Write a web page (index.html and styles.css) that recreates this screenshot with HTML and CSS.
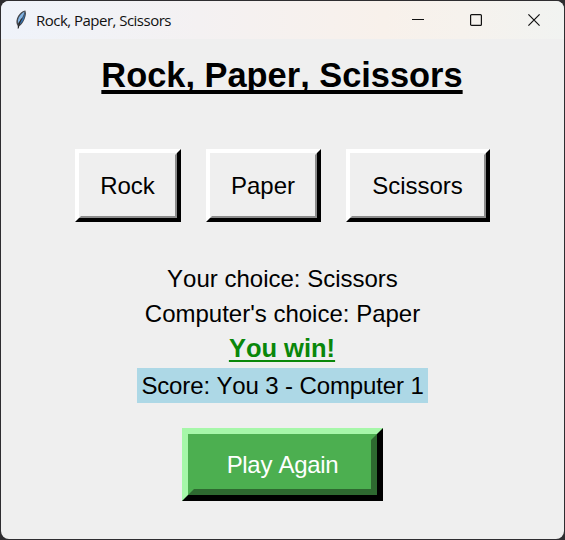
FILE: index.html
```html
<!DOCTYPE html>
<html lang="en">
<head>
<meta charset="utf-8">
<title>Rock, Paper, Scissors</title>
<link rel="stylesheet" href="styles.css">
</head>
<body>
<div class="window">
  <header class="titlebar">
    <svg class="feather" width="12" height="20" viewBox="0 0 12 20">
      <path d="M10.4 .6C7.200 1 3.400 4.400 2 8.600c-.9 2.700-.8 4.900.5 7L3.200 18.500l1.100-2.300C7.800 14 10.600 8.300 11 3.200z" fill="#45484e"/>
      <path d="M9.600 1.500C6.600 3 3.800 6.300 3 10l-.1 3.300C5.500 10.500 8.600 6.500 9.600 1.500z" fill="#82b4e4"/>
      <path d="M10.200 2C9 7 6.500 10 4.200 14.500c3.600-1.800 5.600-6.800 6-12.500z" fill="#2f75bb"/>
      <path d="M6.600 8.500C5 11.500 3.900 14 3.100 18.500" stroke="#222" stroke-width="1" fill="none"/>
    </svg>
    <span class="caption">Rock, Paper, Scissors</span>
    <div class="controls">
      <svg width="12" height="12" viewBox="0 0 12 12"><path d="M0 5.500h12"/></svg>
      <svg width="12" height="12" viewBox="0 0 12 12"><rect x=".6" y=".6" width="10.800" height="10.800" rx="1"/></svg>
      <svg width="12" height="12" viewBox="0 0 12 12"><path d="M.4.4l11.200 11.200M11.600.4L.4 11.600"/></svg>
    </div>
  </header>
  <main class="content">
    <h1 class="heading">Rock, Paper, Scissors</h1>
    <div class="choices">
      <button class="choice rock">Rock</button>
      <button class="choice paper">Paper</button>
      <button class="choice scissors">Scissors</button>
    </div>
    <p class="line">Your choice: Scissors</p>
    <p class="line">Computer's choice: Paper</p>
    <p class="result"><span>You win!</span></p>
    <p class="score">Score: You 3 - Computer 1</p>
    <button class="again">Play Again</button>
  </main>
</div>
</body>
</html>
```

FILE: styles.css
```css
* { box-sizing: border-box; }
body {
  margin: 0;
  width: 565px;
  height: 540px;
  padding: 1px;
  overflow: hidden;
  background: #2e2d30;
  font-family: "Liberation Sans", Arial, sans-serif;
}
.window {
  width: 563px;
  height: 538px;
  border-radius: 8px;
  overflow: hidden;
  background: #efefef;
}
.titlebar {
  height: 38px;
  display: flex;
  align-items: center;
  padding-left: 14px;
  background: linear-gradient(90deg, #eff3fa 0%, #f4f1f2 35%, #f8f1eb 68%, #f6f2ed 82%, #f1f3f1 100%);
}
.feather { flex: none; }
.caption {
  margin-left: 9px;
  font: 15px/20px "Open Sans", "Noto Sans", sans-serif;
  letter-spacing: -0.52px;
  color: #111;
  white-space: nowrap;
}
.controls {
  margin-left: auto;
  display: flex;
  gap: 46px;
  padding-right: 24px;
}
.controls svg {
  fill: none;
  stroke: #111;
  stroke-width: 1.2;
}
.content {
  display: flex;
  flex-direction: column;
  align-items: center;
  font-size: 24px;
  font-kerning: none;
  color: #000;
}
.heading {
  margin: 15px 1px 0 0;
  height: 42px;
  font-size: 34.4px;
  line-height: 42px;
  text-decoration: underline;
  text-decoration-thickness: 4px;
  text-underline-offset: 3px;
  text-decoration-skip-ink: none;
  white-space: nowrap;
}
.choices {
  display: flex;
  gap: 25px;
  margin-top: 53px;
}
button {
  position: relative;
  margin: 0;
  padding: 0;
  font: inherit;
  font-kerning: none;
}
button::after {
  content: "";
  position: absolute;
  inset: 0;
  border-style: solid;
}
.choice {
  height: 73px;
  background: #efefef;
  color: #000;
  border: 4px solid;
  border-color: #fff #000 #000 #fff;
  padding-right: 1px;
}
.choice::after {
  border-width: 2px;
  border-color: transparent #8c8c8c #8c8c8c transparent;
}
.rock { width: 106px; }
.paper { width: 115px; }
.scissors { width: 144px; }
.line {
  margin: 0;
  height: 35px;
  line-height: 35px;
}
.choices + .line { margin-top: 39px; }
.result {
  margin: 0 1px 0 0;
  height: 37px;
  line-height: 35px;
  font-size: 25.5px;
  font-weight: bold;
  color: #0a870a;
}
.result span {
  text-decoration: underline;
  text-decoration-thickness: 2px;
  text-underline-offset: 3px;
}
.score {
  margin: 0;
  width: 291px;
  height: 35px;
  line-height: 35px;
  text-align: center;
  letter-spacing: -0.13px;
  background: #add8e6;
}
.again {
  width: 201px;
  height: 73px;
  margin-top: 25px;
  color: #fff;
  background: #4caf50;
  border: 6px solid;
  border-color: #a6f7a9 #000 #000 #a6f7a9;
  letter-spacing: -0.3px;
}
.again::after {
  border-width: 6px;
  border-color: transparent #2e6930 #2e6930 transparent;
}
```
